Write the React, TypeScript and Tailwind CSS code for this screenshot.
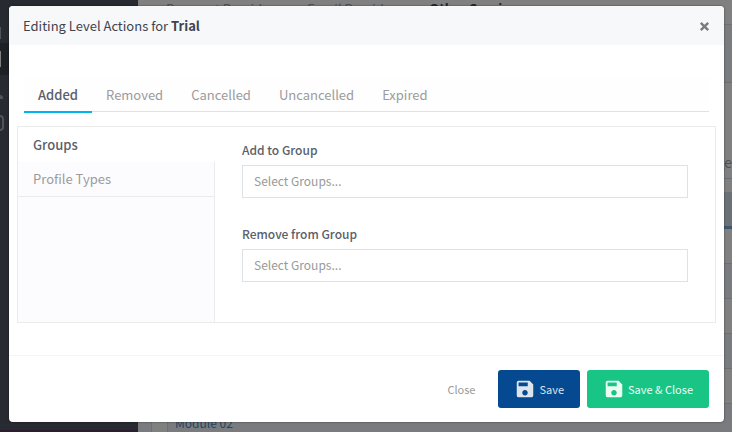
import { useState } from 'react';
import { MdSave } from 'react-icons/md';

const tabs = ['Added', 'Removed', 'Cancelled', 'Uncancelled', 'Expired'];
const sections = ['Groups', 'Profile Types'];
const modules = ['', '', '', '', '', 'Module 02'];

// Dimmed admin page behind the dialog
function PageBehind() {
  return (
    <div aria-hidden="true" className="absolute inset-0 flex overflow-hidden bg-[#808080] text-xs">
      <div className="flex w-[138px] shrink-0 flex-col border-b-2 border-[#2b1d2e] bg-[#272b31]">
        <div className="flex h-[43px] items-end pb-1">
          <span className="h-3 w-px bg-[#50545a]" />
        </div>
        <div className="flex h-8 items-center bg-[#1d2024]">
          <span className="h-4 w-px bg-[#808080]" />
        </div>
        <div className="flex h-8 items-end pb-2">
          <span className="h-1 w-[3px] rounded-tr bg-[#50545a]" />
        </div>
        <div className="flex h-8 items-center">
          <span className="h-4 w-1 rounded-r-sm border-2 border-l-0 border-[#50545a]" />
        </div>
      </div>
      <div className="min-w-0 grow">
        <div className="flex h-6 gap-[27px] pl-7 text-[13px] leading-[18px] text-[#4f5155]">
          <span>Payment Providers</span>
          <span>Email Providers</span>
          <span className="font-bold text-[#23272f]">Other Services</span>
        </div>
        <div className="h-[59px] border-y border-[#6d7074] bg-[#7a7c7e]" />
        <div className="h-24 border-b border-[#66707a] pt-[69px] text-right text-sm leading-5 text-[#4f5155]">
          Page
        </div>
        <div className="flex pt-[13px]">
          <div className="w-[14px] border-r border-[#6d7074] bg-[#797b7e]" />
          <div className="w-4 border-r border-[#6d7074]" />
          <div className="grow">
            <div className="h-[37px] border-b-[3px] border-[#3f5670] bg-[#6a7278]" />
            {modules.map((name, index) => (
              <div
                key={index}
                className="h-[35px] border-b border-[#6d7074] px-[7px] leading-[38px] text-[#23435f] odd:bg-[#797b7e] last:bg-[#808080]"
              >
                {name}
              </div>
            ))}
          </div>
        </div>
      </div>
    </div>
  );
}

function GroupField({ id, label }: { id: string; label: string }) {
  return (
    <div>
      <label htmlFor={id} className="mb-[5px] block text-xs leading-5 font-medium text-[#5a606b]">
        {label}
      </label>
      <input
        id={id}
        type="text"
        placeholder="Select Groups..."
        className="block h-[33px] w-full border border-[#dce2ea] bg-white px-[11px] pb-[2px] text-xs outline-none placeholder:text-[#999]"
      />
    </div>
  );
}

export default function App() {
  const [activeTab, setActiveTab] = useState('Added');
  const [activeSection, setActiveSection] = useState('Groups');

  return (
    <div className="relative min-h-screen overflow-hidden pt-[6px] pr-2 pb-[10px] pl-[9px] font-['Noto_Sans_CJK_SC',sans-serif]">
      <PageBehind />

      <div
        role="dialog"
        aria-labelledby="dialog-title"
        className="relative overflow-hidden rounded bg-white shadow-[0_0_2px_rgba(0,0,0,0.6)]"
      >
        {/* Header */}
        <div className="flex h-[39px] items-center justify-between bg-[#f7f8fa] px-[14px]">
          <h2 id="dialog-title" className="text-[13px] leading-5 text-[#3f444d]">
            Editing Level Actions for <strong className="font-bold">Trial</strong>
          </h2>
          <button type="button" aria-label="Close dialog" className="pt-px text-[#7b7c7e]">
            <svg viewBox="0 0 11 11" className="h-[11px] w-[11px]" stroke="currentColor" strokeWidth="2.4">
              <path d="M1.8 1.8l7.4 7.4M9.2 1.8l-7.4 7.4" />
            </svg>
          </button>
        </div>

        {/* Tabs */}
        <div className="px-[15px] pt-8">
          <div role="tablist" className="flex h-[35px] border-b border-[#dce2ea] bg-[#fefefe]">
            {tabs.map((tab) => (
              <button
                key={tab}
                type="button"
                role="tab"
                aria-selected={activeTab === tab}
                onClick={() => setActiveTab(tab)}
                className={
                  activeTab === tab
                    ? 'h-9 border-b-2 border-[#00b5ec] px-[14px] text-[13px] leading-9 font-medium text-[#5a606b]'
                    : 'h-9 px-[14px] text-[13px] leading-9 text-[#9b9b9b]'
                }
              >
                {tab}
              </button>
            ))}
          </div>
        </div>

        {/* Panel */}
        <div className="mx-2 mt-[14px] mb-8 flex border border-[#ebebeb]">
          <div className="flex w-[197px] shrink-0 flex-col">
            {sections.map((section) => (
              <button
                key={section}
                type="button"
                onClick={() => setActiveSection(section)}
                className={
                  activeSection === section
                    ? 'h-[35px] px-[15px] text-left text-[13px] leading-5 font-medium text-[#5a606b]'
                    : 'h-[35px] border-r border-b border-[#ebebeb] bg-[#fcfcfe] px-[15px] text-left text-[13px] leading-5 text-[#9b9b9b]'
                }
              >
                {section}
              </button>
            ))}
            <div className="grow border-r border-[#ebebeb] bg-[#fcfcfe]" />
          </div>
          <div className="flex grow flex-col gap-[26px] px-[27px] pt-[13px] pb-10">
            <GroupField id="add-group" label="Add to Group" />
            <GroupField id="remove-group" label="Remove from Group" />
          </div>
        </div>

        {/* Footer */}
        <div className="flex items-center justify-end border-t border-[#f5f5f5] px-[15px] py-[14px] text-[11px]">
          <button type="button" className="px-[23px] text-[#9b9b9b]">
            Close
          </button>
          <button
            type="button"
            className="mr-[7px] flex h-[38px] items-center gap-[3px] rounded-[3px] bg-[#054a91] px-4 text-[#dce4ee]"
          >
            <MdSave className="h-[22px] w-[22px]" />
            Save
          </button>
          <button
            type="button"
            className="flex h-[38px] items-center gap-[3px] rounded-[3px] bg-[#18c585] px-4 text-[#ecfcf5]"
          >
            <MdSave className="h-[22px] w-[22px]" />
            Save &amp; Close
          </button>
        </div>
      </div>
    </div>
  );
}
